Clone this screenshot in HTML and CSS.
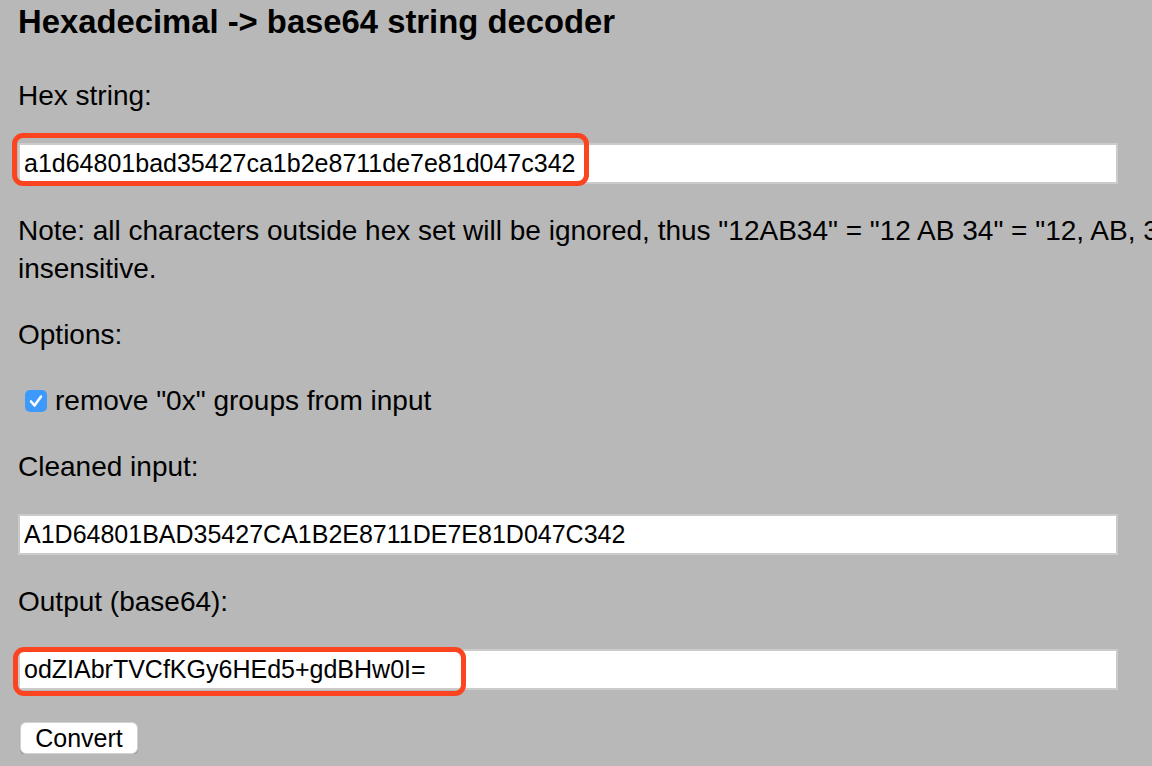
FILE: index.html
```html
<!DOCTYPE html>
<html>
<head>
<meta charset="utf-8">
<title>Hexadecimal -> base64 string decoder</title>
<link rel="stylesheet" href="styles.css">
</head>
<body>
<main class="page">
  <h3 class="title">Hexadecimal -&gt; base64 string decoder</h3>
  <p class="label">Hex string:</p>
  <div class="field">
    <input class="text-input" type="text" value="a1d64801bad35427ca1b2e8711de7e81d047c342">
    <span class="mark mark-hex"></span>
  </div>
  <p class="label note">Note: all characters outside hex set will be ignored, thus "12AB34" = "12 AB 34" = "12, AB, 34" = "0x12 0xAB 0x34" and is case<br>insensitive.</p>
  <p class="label">Options:</p>
  <label class="label option">
    <span class="checkbox"><svg viewBox="0 0 22 22" width="22" height="22"><path d="M6 11.5 L9.5 15.5 L16 6.5" fill="none" stroke="#fff" stroke-width="2.6" stroke-linecap="round" stroke-linejoin="round"/></svg></span>
    <span>remove "0x" groups from input</span>
  </label>
  <p class="label">Cleaned input:</p>
  <div class="field">
    <input class="text-input" type="text" value="A1D64801BAD35427CA1B2E8711DE7E81D047C342">
  </div>
  <p class="label">Output (base64):</p>
  <div class="field">
    <input class="text-input" type="text" value="odZIAbrTVCfKGy6HEd5+gdBHw0I=">
    <span class="mark mark-out"></span>
  </div>
  <div class="actions">
    <button class="btn" type="button">Convert</button>
  </div>
</main>
</body>
</html>
```
FILE: styles.css
```css
html, body {
  margin: 0;
  padding: 0;
  background: #b8b8b8;
  overflow: hidden;
}
body {
  font-family: "Liberation Sans", Arial, Helvetica, sans-serif;
  font-size: 28px;
  color: #000;
}
.page {
  display: flex;
  flex-direction: column;
  gap: 28px;
  padding: 3px 0 0 18px;
}
.title {
  margin: 0 0 8px 0;
  font-size: 32.8px;
  font-weight: bold;
  line-height: 38px;
  white-space: nowrap;
}
.label {
  margin: 0;
  line-height: 38px;
  white-space: nowrap;
}
.option {
  display: flex;
  align-items: center;
  gap: 8px;
  padding-left: 7px;
}
.checkbox {
  width: 22px;
  height: 22px;
  border-radius: 5px;
  background: #3d99fb;
  display: flex;
  align-items: center;
  justify-content: center;
}
.checkbox svg {
  display: block;
}
.field {
  position: relative;
  width: 1100px;
}
.text-input {
  display: block;
  box-sizing: border-box;
  width: 1100px;
  height: 41px;
  margin: 0;
  padding: 0 0 0 4px;
  border: 2px solid #cbcbcb;
  background: #fff;
  font-family: "Liberation Sans", Arial, Helvetica, sans-serif;
  font-size: 25px;
  color: #000;
  outline: none;
}
.mark {
  position: absolute;
  box-sizing: border-box;
  border: 5px solid #fc4520;
  border-radius: 11px;
  pointer-events: none;
}
.mark-hex {
  left: -6px;
  top: -10px;
  width: 577px;
  height: 53px;
}
.mark-out {
  left: -5px;
  top: -2px;
  width: 453px;
  height: 49px;
}
.actions {
  display: flex;
  padding: 4px 0 0 2px;
}
.btn {
  width: 118px;
  height: 32px;
  background: #fff;
  border: 1px solid #d2d2d2;
  border-radius: 6px;
  box-shadow: 0 1px 1px rgba(0, 0, 0, 0.25);
  font-family: "Liberation Sans", Arial, Helvetica, sans-serif;
  font-size: 25px;
  color: #000;
  padding: 0;
  line-height: 30px;
}
```
